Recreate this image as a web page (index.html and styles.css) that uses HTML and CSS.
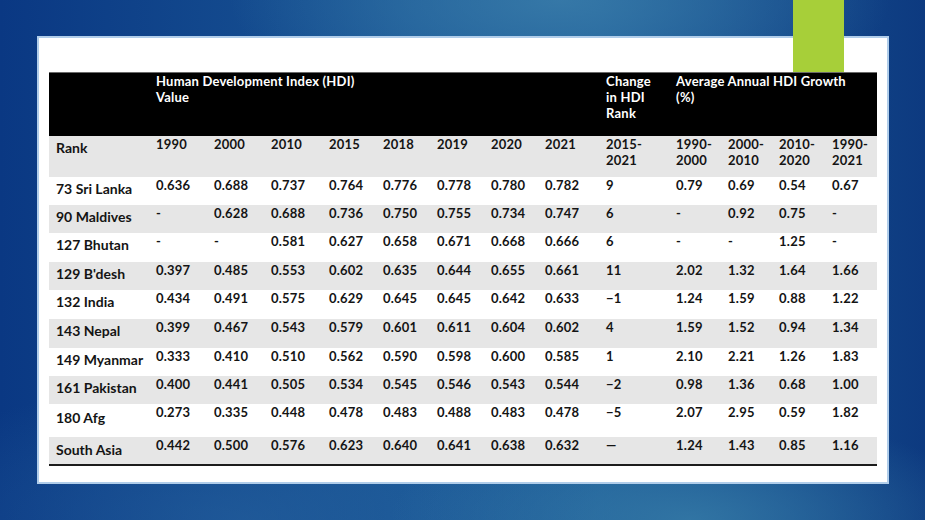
FILE: index.html
```html
<!DOCTYPE html>
<html>
<head>
<meta charset="utf-8">
<link rel="stylesheet" href="styles.css">
</head>
<body>
<div class="slide">
  <div class="accent"></div>
  <div class="panel">
    <table class="hdi">
      <colgroup>
        <col style="width:100px"><col style="width:58px"><col style="width:57px"><col style="width:58px"><col style="width:54px"><col style="width:54px"><col style="width:54px"><col style="width:54px"><col style="width:61px"><col style="width:70px"><col style="width:52px"><col style="width:51px"><col style="width:53px"><col style="width:52px">
      </colgroup>
      <tr class="head">
        <th></th>
        <th colspan="8">Human Development Index (HDI)<br>Value</th>
        <th>Change<br>in HDI<br>Rank</th>
        <th colspan="4">Average Annual HDI Growth<br>(%)</th>
      </tr>
      <tr class="sub">
        <td class="lbl">Rank</td>
        <td>1990</td><td>2000</td><td>2010</td><td>2015</td><td>2018</td><td>2019</td><td>2020</td><td>2021</td>
        <td>2015-<br>2021</td><td>1990-<br>2000</td><td>2000-<br>2010</td><td>2010-<br>2020</td><td>1990-<br>2021</td>
      </tr>
      <tr class="r h28">
        <td class="lbl">73 Sri Lanka</td>
        <td>0.636</td><td>0.688</td><td>0.737</td><td>0.764</td><td>0.776</td><td>0.778</td><td>0.780</td><td>0.782</td>
        <td>9</td><td>0.79</td><td>0.69</td><td>0.54</td><td>0.67</td>
      </tr>
      <tr class="g h28">
        <td class="lbl">90 Maldives</td>
        <td>-</td><td>0.628</td><td>0.688</td><td>0.736</td><td>0.750</td><td>0.755</td><td>0.734</td><td>0.747</td>
        <td>6</td><td>-</td><td>0.92</td><td>0.75</td><td>-</td>
      </tr>
      <tr class="r h29">
        <td class="lbl">127 Bhutan</td>
        <td>-</td><td>-</td><td>0.581</td><td>0.627</td><td>0.658</td><td>0.671</td><td>0.668</td><td>0.666</td>
        <td>6</td><td>-</td><td>-</td><td>1.25</td><td>-</td>
      </tr>
      <tr class="g h28">
        <td class="lbl">129 B'desh</td>
        <td>0.397</td><td>0.485</td><td>0.553</td><td>0.602</td><td>0.635</td><td>0.644</td><td>0.655</td><td>0.661</td>
        <td>11</td><td>2.02</td><td>1.32</td><td>1.64</td><td>1.66</td>
      </tr>
      <tr class="r h29">
        <td class="lbl">132 India</td>
        <td>0.434</td><td>0.491</td><td>0.575</td><td>0.629</td><td>0.645</td><td>0.645</td><td>0.642</td><td>0.633</td>
        <td>&minus;1</td><td>1.24</td><td>1.59</td><td>0.88</td><td>1.22</td>
      </tr>
      <tr class="g h29">
        <td class="lbl">143 Nepal</td>
        <td>0.399</td><td>0.467</td><td>0.543</td><td>0.579</td><td>0.601</td><td>0.611</td><td>0.604</td><td>0.602</td>
        <td>4</td><td>1.59</td><td>1.52</td><td>0.94</td><td>1.34</td>
      </tr>
      <tr class="r h28">
        <td class="lbl">149 Myanmar</td>
        <td>0.333</td><td>0.410</td><td>0.510</td><td>0.562</td><td>0.590</td><td>0.598</td><td>0.600</td><td>0.585</td>
        <td>1</td><td>2.10</td><td>2.21</td><td>1.26</td><td>1.83</td>
      </tr>
      <tr class="g h28">
        <td class="lbl">161 Pakistan</td>
        <td>0.400</td><td>0.441</td><td>0.505</td><td>0.534</td><td>0.545</td><td>0.546</td><td>0.543</td><td>0.544</td>
        <td>&minus;2</td><td>0.98</td><td>1.36</td><td>0.68</td><td>1.00</td>
      </tr>
      <tr class="r h33">
        <td class="lbl">180 Afg</td>
        <td>0.273</td><td>0.335</td><td>0.448</td><td>0.478</td><td>0.483</td><td>0.488</td><td>0.483</td><td>0.478</td>
        <td>&minus;5</td><td>2.07</td><td>2.95</td><td>0.59</td><td>1.82</td>
      </tr>
      <tr class="g h28 last">
        <td class="lbl">South Asia</td>
        <td>0.442</td><td>0.500</td><td>0.576</td><td>0.623</td><td>0.640</td><td>0.641</td><td>0.638</td><td>0.632</td>
        <td>&mdash;</td><td>1.24</td><td>1.43</td><td>0.85</td><td>1.16</td>
      </tr>
    </table>
  </div>
</div>
</body>
</html>
```
FILE: styles.css
```css
* { box-sizing: border-box; }
html, body { margin: 0; padding: 0; }
body {
  width: 925px;
  height: 520px;
  overflow: hidden;
  background:
    radial-gradient(ellipse 330px 120px at 560px 0px, rgba(58,125,170,0.85), rgba(58,125,170,0) 100%),
    radial-gradient(ellipse 300px 110px at 690px 520px, rgba(55,125,168,0.8), rgba(55,125,168,0) 100%),
    radial-gradient(ellipse 380px 140px at 240px 520px, rgba(40,100,160,0.55), rgba(40,100,160,0) 100%),
    linear-gradient(90deg, #0a3883 0%, #1a5796 45%, #1d5c98 65%, #0d3a80 100%);
  font-family: "Lato", "Liberation Sans", sans-serif;
}
.slide {
  position: relative;
  width: 925px;
  height: 520px;
  padding: 36px 0 0 37px;
}
.accent {
  position: absolute;
  left: 793px;
  top: 0;
  width: 51px;
  height: 72px;
  background: #a7cf39;
  z-index: 2;
}
.panel {
  width: 852px;
  height: 448px;
  background: #ffffff;
  border: 2px solid #b0cdea;
  padding: 34px 0 0 10px;
}
.hdi {
  width: 828px;
  table-layout: fixed;
  border-collapse: collapse;
  font-size: 13px;
  line-height: 16px;
  font-weight: 700;
  letter-spacing: 0.2px;
  color: #141414;
}
.hdi th, .hdi td {
  padding: 0 2px 0 7px;
  text-align: left;
  vertical-align: top;
  white-space: nowrap;
}
.hdi tr.head {
  height: 63px;
  background: #000;
  color: #fff;
  border-top: 1px solid #6a6a6a;
}
.hdi tr.head th { font-weight: 700; padding-top: 0; }
.hdi tr.sub { height: 41px; background: #e6e6e6; }
.hdi tr.sub td { padding-top: 0; }
.hdi .lbl { font-size: 14px; letter-spacing: 0; padding-top: 4px; }
.hdi tr.sub .lbl { padding-top: 4px; }
.hdi tr.r { background: #ffffff; }
.hdi tr.g { background: #e6e6e6; }
.hdi tr.h28 { height: 28px; }
.hdi tr.h29 { height: 29px; }
.hdi tr.h33 { height: 33px; }
.hdi tr.h33 .lbl { padding-top: 6px; }
.hdi tr.last { border-bottom: 2px solid #1c1c1c; }
.hdi tr.last .lbl { padding-top: 5px; }
```
